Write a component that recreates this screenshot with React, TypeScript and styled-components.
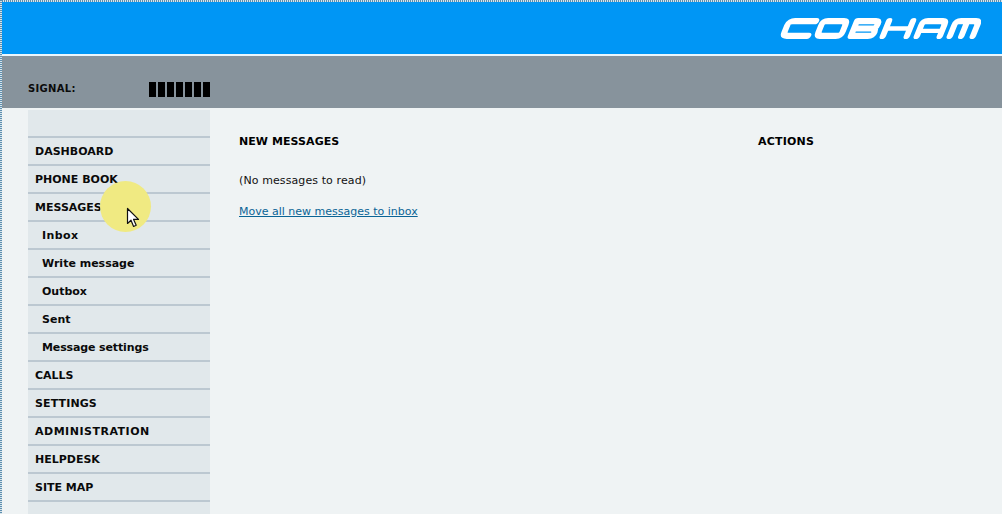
import React from "react";
import styled, { createGlobalStyle } from "styled-components";

const Global = createGlobalStyle`
  html, body { margin: 0; padding: 0; background: #eff3f4; }
  body { font-family: "DejaVu Sans", Verdana, sans-serif; font-size: 11px; color: #000; overflow: hidden; }
`;

const Page = styled.div`
  position: relative;
  width: 1002px;
  height: 514px;
  overflow: hidden;
  box-sizing: border-box;
  padding: 2px 0 0 2px;
  background-color: #eff3f4;
  background-image: repeating-linear-gradient(90deg, #5d8fb0 0 1px, #d8e4ea 1px 2px);
  background-size: 100% 2px;
  background-repeat: no-repeat;
  &::before {
    content: "";
    position: absolute;
    left: 0;
    top: 0;
    bottom: 0;
    width: 2px;
    background-image: repeating-linear-gradient(180deg, #5d8fb0 0 1px, #d8e4ea 1px 2px);
  }
`;

const Banner = styled.header`
  height: 52px;
  background: #0096f5;
  display: flex;
  justify-content: flex-end;
  align-items: flex-start;
  padding: 16px 21px 0 0;
  box-sizing: border-box;
`;

const BannerRule = styled.div`
  height: 2px;
  background: #eaf6fc;
`;

const StatusBar = styled.div`
  height: 52px;
  background: #87939c;
  display: flex;
  align-items: flex-end;
  padding: 0 0 13px 26px;
  box-sizing: border-box;
`;

const SignalLabel = styled.span`
  width: 121px;
  font-size: 10px;
  font-weight: 700;
  line-height: 12px;
  letter-spacing: 0.3px;
  color: #0b0b0b;
`;

const SignalBars = styled.div`
  display: flex;
  gap: 2px;
  margin-bottom: -2px;
`;

const SignalBar = styled.i`
  display: block;
  width: 7px;
  height: 15px;
  background: #000;
`;

const Body = styled.div`
  display: flex;
  padding: 2px 0 0 26px;
  align-items: flex-start;
`;

const Sidebar = styled.nav`
  width: 182px;
  height: 410px;
  flex: none;
  background: #e1e8eb;
  padding-top: 26px;
  box-sizing: border-box;
  display: flex;
  flex-direction: column;
`;

const NavItem = styled.a<{ $sub?: boolean; $track?: number }>`
  display: block;
  height: 28px;
  box-sizing: border-box;
  border-top: 2px solid #bcc8d1;
  padding: 1px 0 0 ${(p) => (p.$sub ? 14 : 7)}px;
  font-size: 11px;
  font-weight: 700;
  line-height: 26px;
  letter-spacing: ${(p) => p.$track ?? 0}px;
  color: #0a0a0a;
`;

const Content = styled.main`
  flex: 1;
  display: flex;
  padding: 24px 0 0 29px;
`;

const MessagesColumn = styled.section`
  width: 519px;
  flex: none;
`;

const Heading = styled.h2<{ $track: number }>`
  margin: 0;
  font-size: 11px;
  font-weight: 700;
  line-height: 16px;
  letter-spacing: ${(p) => p.$track}px;
  color: #000;
`;

const Note = styled.p`
  margin: 23px 0 0;
  font-size: 11px;
  line-height: 16px;
  letter-spacing: 0.1px;
  color: #111;
`;

const MoveLink = styled.a`
  display: block;
  margin-top: 15px;
  font-size: 11px;
  line-height: 16px;
  color: #0a6496;
  text-decoration: underline;
`;

const Highlight = styled.div`
  position: absolute;
  left: 100px;
  top: 181px;
  width: 51px;
  height: 51px;
  border-radius: 50%;
  background: #f0ea82;
`;

const Pointer = styled.svg`
  position: absolute;
  left: 126px;
  top: 207px;
`;

type Entry = { label: string; sub?: boolean; track?: number };

const nav: Entry[] = [
  { label: "DASHBOARD" },
  { label: "PHONE BOOK" },
  { label: "MESSAGES" },
  { label: "Inbox", sub: true, track: 0.4 },
  { label: "Write message", sub: true },
  { label: "Outbox", sub: true },
  { label: "Sent", sub: true },
  { label: "Message settings", sub: true, track: -0.13 },
  { label: "CALLS" },
  { label: "SETTINGS", track: 0.12 },
  { label: "ADMINISTRATION", track: 0.5 },
  { label: "HELPDESK" },
  { label: "SITE MAP" },
];

const Logo = () => (
  <svg width="201" height="22" viewBox="0 0 201 22" role="img" aria-label="Cobham logo">
    <g fill="none" stroke="#fff" strokeWidth="6.2" strokeLinejoin="round" strokeLinecap="round" transform="translate(4.2 0) skewX(-22)">
      <path d="M33 3.2 H11 Q6 3.2 6 7 V14 Q6 17.8 11 17.8 H31" />
      <path d="M44 3.2 H60 Q64 3.2 64 7 V14 Q64 17.8 60 17.8 H44 Q40 17.8 40 14 V7 Q40 3.2 44 3.2 Z" />
      <path d="M74 3.2 H92 Q96 3.2 96 6.5 Q96 10.5 92 10.5 H76 M92 10.5 Q96 10.5 96 14.5 Q96 17.8 92 17.8 H74 V3.2" />
      <path d="M106 3.2 V18 M130 3.2 V18" />
      <path d="M106 10.5 H130" strokeWidth="4.4" />
      <path d="M140 18 V7 Q140 3.2 144 3.2 H159 Q163 3.2 163 7 V18" />
      <path d="M140 12.8 H163" strokeWidth="4.2" />
      <path d="M173 18 V7 Q173 3.2 177 3.2 H192 Q196 3.2 196 7 V18 M184.5 5 V18" />
    </g>
  </svg>
);

export default function App() {
  return (
    <>
      <Global />
      <Page>
        <Banner>
          <Logo />
        </Banner>
        <BannerRule />
        <StatusBar>
          <SignalLabel>SIGNAL:</SignalLabel>
          <SignalBars>
            {Array.from({ length: 7 }, (_, i) => (
              <SignalBar key={i} />
            ))}
          </SignalBars>
        </StatusBar>
        <Body>
          <Sidebar>
            {nav.map((n) => (
              <NavItem key={n.label} $sub={n.sub} $track={n.track}>
                {n.label}
              </NavItem>
            ))}
            <NavItem />
          </Sidebar>
          <Content>
            <MessagesColumn>
              <Heading $track={0.07}>NEW MESSAGES</Heading>
              <Note>(No messages to read)</Note>
              <MoveLink>Move all new messages to inbox</MoveLink>
            </MessagesColumn>
            <Heading $track={0.2}>ACTIONS</Heading>
          </Content>
        </Body>
        <Highlight />
        <Pointer width="14" height="22" viewBox="0 0 14 22">
          <path d="M1.5 1.5 V16.5 L5 13.2 L7.6 19.5 L10.2 18.3 L7.6 12.4 H12.5 Z" fill="#fff" stroke="#111" strokeWidth="1.2" strokeLinejoin="round" />
        </Pointer>
      </Page>
    </>
  );
}
